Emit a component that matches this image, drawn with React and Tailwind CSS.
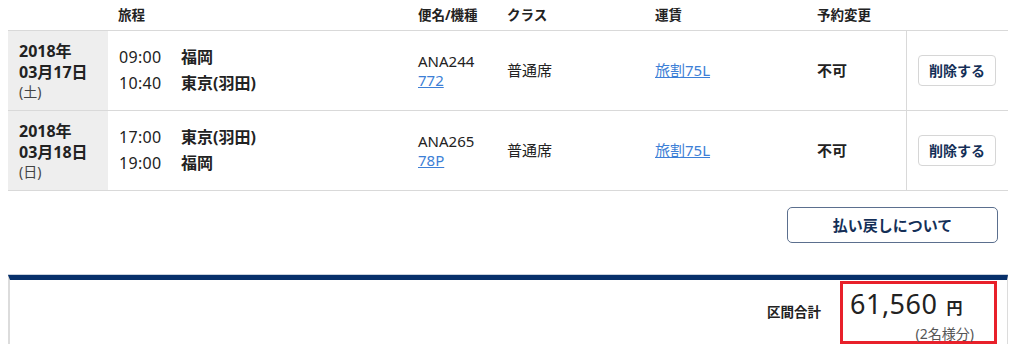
import React from "react";

const font = { fontFamily: '"Noto Sans", "Noto Sans CJK JP", sans-serif' };

const flights = [
  {
    year: "2018年",
    date: "03月17日",
    dow: "(土)",
    legs: [
      ["09:00", "福岡"],
      ["10:40", "東京(羽田)"],
    ],
    flight: "ANA244",
    aircraft: "772",
  },
  {
    year: "2018年",
    date: "03月18日",
    dow: "(日)",
    legs: [
      ["17:00", "東京(羽田)"],
      ["19:00", "福岡"],
    ],
    flight: "ANA265",
    aircraft: "78P",
  },
];

const cols = "grid grid-cols-[100px_310px_89px_148px_162px_89px_102px]";

// FlightRow
const FlightRow = ({ f }) => (
  <div className={`${cols} h-[80px] border-b border-[#d9d9d9] text-[#222]`}>
    <div className="bg-[#eeeeee] pl-[11px] pt-[10px] leading-[21px]">
      <div className="text-[16px] font-bold">{f.year}</div>
      <div className="text-[16px] font-bold">{f.date}</div>
      <div className="text-[14px] text-[#444] leading-[18px]">{f.dow}</div>
    </div>
    <div className="pl-[11px] flex flex-col justify-center gap-[5px]">
      {f.legs.map(([t, p], i) => (
        <div key={i} className="flex items-center text-[16px] leading-[21px]">
          <span className="w-[62px] tracking-[0.3px]">{t}</span>
          <span className="font-bold">{p}</span>
        </div>
      ))}
    </div>
    <div className="flex flex-col justify-center text-[15px] leading-[19px]">
      <span>{f.flight}</span>
      <a className="text-[#3d7fd6] underline w-fit">{f.aircraft}</a>
    </div>
    <div className="flex items-center text-[15px]">普通席</div>
    <div className="flex items-center text-[15px]">
      <a className="text-[#3d7fd6] underline">旅割75L</a>
    </div>
    <div className="flex items-center text-[15px] font-bold">不可</div>
    <div className="border-l border-[#d9d9d9] flex items-center pl-[11px]">
      <button className="w-[78px] h-[31px] border border-[#d6d6d6] rounded-[4px] bg-white text-[14px] font-bold text-[#142f57]">
        削除する
      </button>
    </div>
  </div>
);

export default function App() {
  return (
    <div className="bg-white w-[1024px] h-[344px] overflow-hidden pl-[8px]" style={font}>
      <div className="w-[1000px]">
        <div className={`${cols} h-[31px] border-b border-[#d9d9d9] text-[13.5px] font-bold text-[#222] items-center`}>
          <div />
          <div className="pl-[10px]">旅程</div>
          <div>便名/機種</div>
          <div>クラス</div>
          <div>運賃</div>
          <div>予約変更</div>
          <div />
        </div>
        {flights.map((f, i) => (
          <FlightRow key={i} f={f} />
        ))}

        <div className="flex justify-end pr-[10px] mt-[16px]">
          <button className="w-[211px] h-[36px] border border-[#5b6f8e] rounded-[5px] bg-white text-[15px] font-bold text-[#142f57]">
            払い戻しについて
          </button>
        </div>

        <div className="mt-[31px] border-t border-[#c9d1dc]">
          <div className="border-t-[5px] border-t-[#07306a] border-l-2 border-r border-[#dcdcdc] border-l-[#dcdcdc] h-[80px] flex justify-end items-start pr-[10px]">
            <div className="flex items-center mt-[1px]">
              <span className="text-[13.5px] font-bold text-[#222] mr-[19px]">区間合計</span>
              <div className="w-[157px] h-[63px] border-[3px] border-[#e8202a] pl-[7px] pt-[3px]">
                <div className="flex items-baseline leading-[34px] text-[#222]">
                  <span className="text-[27px] tracking-[0.5px]">61,560</span>
                  <span className="text-[16px] font-bold ml-[9px]">円</span>
                </div>
                <div className="text-[14px] text-[#555] leading-[17px] text-right pr-[20px]">(2名様分)</div>
              </div>
            </div>
          </div>
        </div>
      </div>
    </div>
  );
}
